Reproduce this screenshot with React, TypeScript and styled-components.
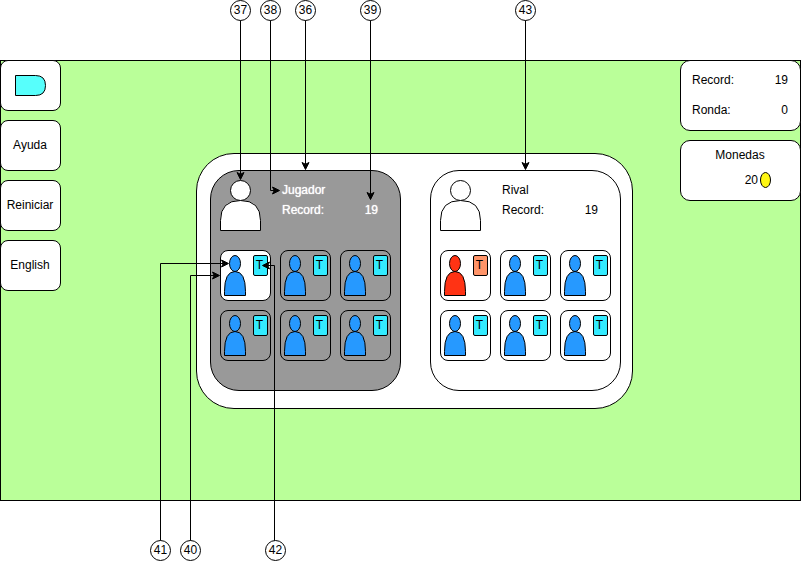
import React from 'react';
import styled, { createGlobalStyle } from 'styled-components';

const GlobalStyle = createGlobalStyle`
  *, *::before, *::after { box-sizing: border-box; }
  body {
    margin: 0;
    background: #fff;
    color: #000;
    font: 12px/20px "Liberation Sans", Arial, sans-serif;
  }
`;

const Page = styled.div`
  padding: 60px 0;
`;

const Stage = styled.main`
  display: grid;
  grid-template-columns: 61px 135fr auto 47fr 121px;
  align-items: start;
  background: #baff99;
  box-shadow: inset 0 0 0 1px #000;
`;

const Menu = styled.nav`
  display: flex;
  flex-direction: column;
  gap: 9px;
`;

const MenuButton = styled.button`
  display: flex;
  align-items: center;
  justify-content: center;
  height: 51px;
  padding: 0 1px 1px 0;
  border: 1px solid #000;
  border-radius: 8px;
  background: #fff;
  color: inherit;
  font: inherit;
`;

const IconButton = styled(MenuButton)`
  padding: 0;
`;

const Board = styled.section`
  position: relative;
  grid-column: 3;
  display: flex;
  gap: 29px;
  margin: 93px 0 92px;
  padding: 16px 11px 17px 13px;
  border: 1px solid #000;
  border-radius: 38px;
  background: #fff;
`;

const Panel = styled.article<{ $active?: boolean }>`
  padding: 9px 9px 29px;
  border: 1px solid #000;
  border-radius: 29px;
  background: ${(p) => (p.$active ? '#999' : '#fff')};
  color: ${(p) => (p.$active ? '#fff' : '#000')};
  text-shadow: ${(p) => (p.$active ? '0 0 1px #fff' : 'none')};
`;

const PanelHeader = styled.header`
  display: flex;
  gap: 21px;
  margin-bottom: 19px;
`;

const PanelInfo = styled.div`
  flex: 1;
  padding-right: 13px;
`;

const Row = styled.div`
  display: flex;
  justify-content: space-between;
`;

const Cards = styled.ul`
  display: grid;
  grid-template-columns: repeat(3, 51px);
  gap: 9px;
  margin: 0;
  padding: 0;
  list-style: none;
`;

const Card = styled.li<{ $selected?: boolean }>`
  display: flex;
  justify-content: space-between;
  height: 51px;
  padding: 4px 2px 4px 3px;
  border: 1px solid #000;
  border-radius: 8px;
  background: ${(p) => (p.$selected ? '#fff' : 'transparent')};
`;

const Tag = styled.span<{ $hostile?: boolean }>`
  width: 15px;
  height: 21px;
  padding-right: 2px;
  border: 1px solid #000;
  border-radius: 2px;
  background: ${(p) => (p.$hostile ? '#ff9469' : '#33ebff')};
  color: #000;
  line-height: 19px;
  text-align: center;
  text-shadow: none;
`;

const Sidebar = styled.aside`
  grid-column: 5;
  display: flex;
  flex-direction: column;
  gap: 9px;
`;

const InfoBox = styled.div`
  display: flex;
  flex-direction: column;
  gap: 10px;
  padding: 9px 12px 10px 11px;
  border: 1px solid #000;
  border-radius: 10px;
  background: #fff;
`;

const CoinBox = styled(InfoBox)`
  gap: 5px;
  padding: 4px 29px 10px 28px;
  text-align: center;
`;

const CoinRow = styled.div`
  display: flex;
  align-items: center;
  justify-content: flex-end;
  gap: 2px;
`;

const Drawing = styled.svg`
  display: block;
  flex: none;
  overflow: visible;
`;

const Callouts = styled.div`
  position: absolute;
  top: -154px;
  left: -47px;
  width: 386px;
  height: 561px;
  pointer-events: none;
`;

const Marker = styled.span<{ $x: number; $bottom?: boolean }>`
  position: absolute;
  left: ${(p) => p.$x}px;
  ${(p) => (p.$bottom ? 'bottom: 0;' : 'top: 0;')}
  width: 21px;
  height: 21px;
  border: 1px solid #000;
  border-radius: 50%;
  background: #fff;
  line-height: 19px;
  display: flex;
  justify-content: center;
`;

const PlayerAvatar = () => (
  <Drawing width="41" height="51" viewBox="0 0 41 51" fill="#fff" stroke="#000" aria-hidden="true">
    <path d="M0.5 50.5V40.5Q0.5 20.5 20.5 20.5Q40.5 20.5 40.5 40.5V50.5Z" />
    <circle cx="20.5" cy="10.5" r="10" />
  </Drawing>
);

const Character = ({ color }: { color: string }) => (
  <Drawing width="22" height="41" viewBox="0 0 22 41" fill={color} stroke="#000" aria-hidden="true">
    <path d="M0.5 40.5V36.5Q0.5 16.5 11 16.5Q21.5 16.5 21.5 36.5V40.5Z" />
    <ellipse cx="11" cy="8.5" rx="5.5" ry="8" />
  </Drawing>
);

type PlayerProps = { name: string; record: number; active?: boolean; selected?: number; hostile?: number };

const Player = ({ name, record, active, selected, hostile }: PlayerProps) => (
  <Panel $active={active}>
    <PanelHeader>
      <PlayerAvatar />
      <PanelInfo>
        <Row>{name}</Row>
        <Row>
          <span>Record:</span>
          <span>{record}</span>
        </Row>
      </PanelInfo>
    </PanelHeader>
    <Cards>
      {[0, 1, 2, 3, 4, 5].map((i) => (
        <Card key={i} $selected={i === selected}>
          <Character color={i === hostile ? '#ff3314' : '#2699ff'} />
          <Tag $hostile={i === hostile}>T</Tag>
        </Card>
      ))}
    </Cards>
  </Panel>
);

const markers = [
  { label: 37, x: 80 },
  { label: 38, x: 110 },
  { label: 36, x: 145 },
  { label: 39, x: 210 },
  { label: 43, x: 365 },
  { label: 41, x: 0, bottom: true },
  { label: 40, x: 30, bottom: true },
  { label: 42, x: 115, bottom: true },
];

const arrows = [
  { line: 'M90.5 20V174', x: 90.5, y: 179.5, angle: 90 },
  { line: 'M120.5 20V190.5H125', x: 129.5, y: 190.5, angle: 0 },
  { line: 'M155.5 20V164', x: 155.5, y: 169.5, angle: 90 },
  { line: 'M220.5 20V194', x: 220.5, y: 199.5, angle: 90 },
  { line: 'M375.5 20V164', x: 375.5, y: 169.5, angle: 90 },
  { line: 'M10.5 541V263.5H73', x: 78.5, y: 263.5, angle: 0 },
  { line: 'M40.5 541V275.5H64', x: 69.5, y: 275.5, angle: 0 },
  { line: 'M124.5 541V265.5H118', x: 112.5, y: 265.5, angle: 180 },
];

export default function App() {
  return (
    <>
      <GlobalStyle />
      <Page>
        <Stage>
          <Menu>
            <IconButton aria-label="Salir">
              <Drawing width="31" height="21" viewBox="0 0 31 21" fill="#57fffc" stroke="#000">
                <path d="M0.5 0.5H20.5Q30.5 0.5 30.5 10.5Q30.5 20.5 20.5 20.5H0.5Z" />
              </Drawing>
            </IconButton>
            <MenuButton>Ayuda</MenuButton>
            <MenuButton>Reiniciar</MenuButton>
            <MenuButton>English</MenuButton>
          </Menu>
          <Board>
            <Player name="Jugador" record={19} active selected={0} />
            <Player name="Rival" record={19} hostile={0} />
            <Callouts>
              <Drawing width="386" height="561" viewBox="0 0 386 561" fill="none" stroke="#000">
                {arrows.map((a) => (
                  <g key={a.line}>
                    <path d={a.line} />
                    <path
                      d="M0 0L-7 3.5L-5.25 0L-7 -3.5Z"
                      fill="#000"
                      transform={`translate(${a.x} ${a.y}) rotate(${a.angle})`}
                    />
                  </g>
                ))}
              </Drawing>
              {markers.map((m) => (
                <Marker key={m.label} $x={m.x} $bottom={m.bottom}>
                  {m.label}
                </Marker>
              ))}
            </Callouts>
          </Board>
          <Sidebar>
            <InfoBox>
              <Row>
                <span>Record:</span>
                <span>19</span>
              </Row>
              <Row>
                <span>Ronda:</span>
                <span>0</span>
              </Row>
            </InfoBox>
            <CoinBox>
              <div>Monedas</div>
              <CoinRow>
                <span>20</span>
                <Drawing width="11" height="16" viewBox="0 0 11 16" fill="#fff714" stroke="#000" aria-hidden="true">
                  <ellipse cx="5.5" cy="8" rx="5" ry="7.5" />
                </Drawing>
              </CoinRow>
            </CoinBox>
          </Sidebar>
        </Stage>
      </Page>
    </>
  );
}
